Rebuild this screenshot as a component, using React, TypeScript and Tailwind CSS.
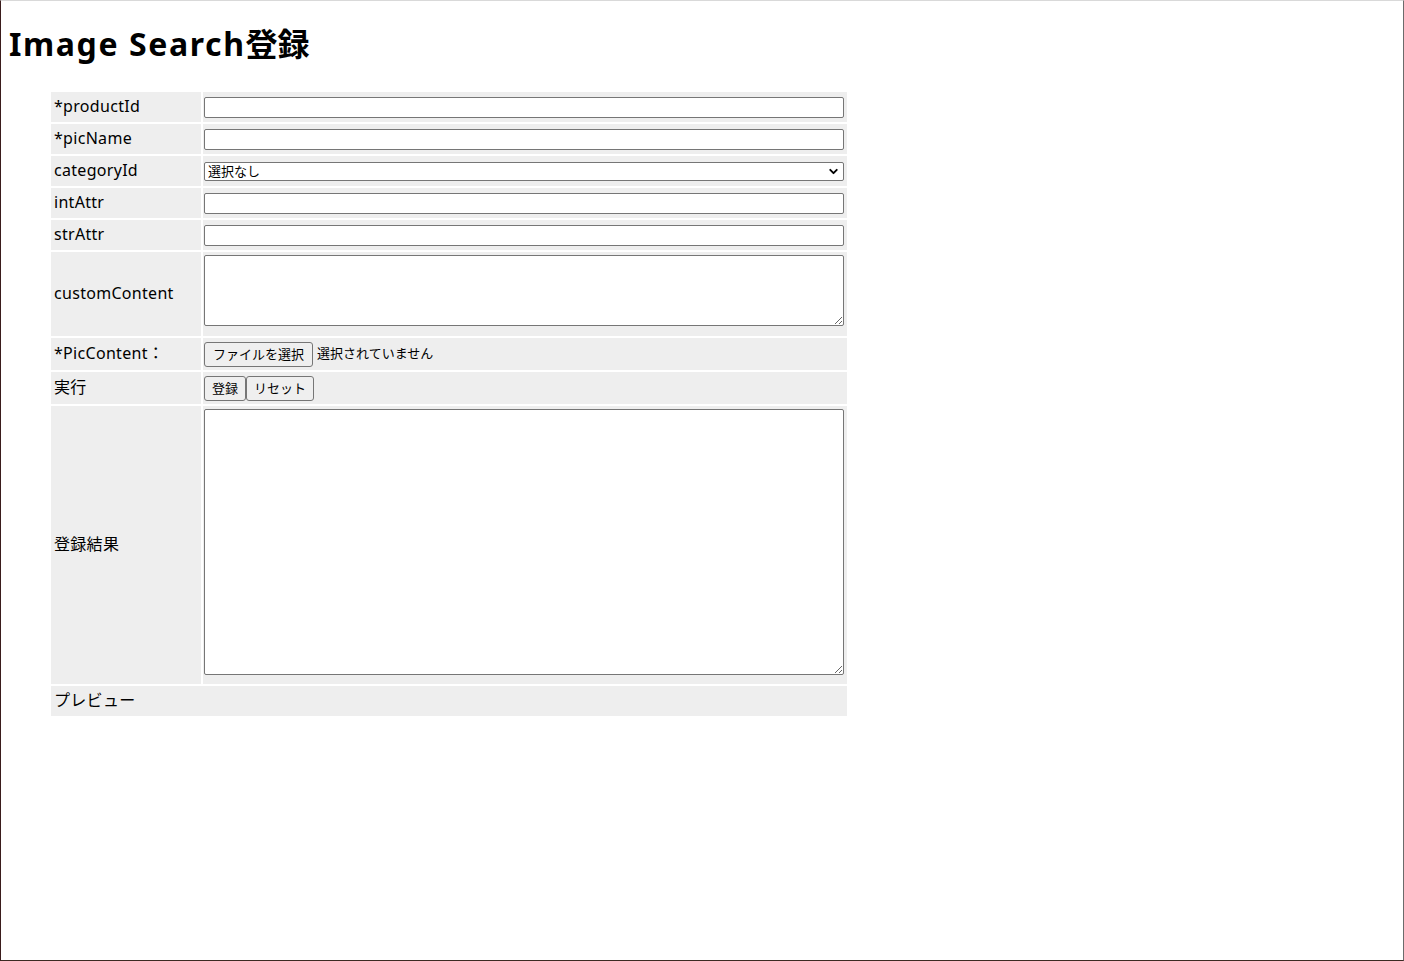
import { ChevronDown } from 'lucide-react'

const FONT = { fontFamily: '"Noto Sans", "Noto Sans CJK JP", sans-serif' }

const TEXT_ROWS = [
  { label: '*productId' },
  { label: '*picName' },
]

const label = 'w-[150px] bg-[#eeeeee] pl-[3px] pb-[2px] h-[30px] align-middle text-[16px] tracking-[0.3px] text-black'
const cell = 'w-[644px] bg-[#eeeeee] px-[1px] align-middle'
const inputCls = 'block w-[640px] h-[21px] border border-[#767676] rounded-[2px] bg-white'
const btn = 'h-[25px] border border-[#767676] rounded-[3px] bg-[#efefef] text-[13px] leading-none text-black'

export default function App() {
  return (
    <div
      className="h-[961px] box-border border-t border-t-[#d9d9d9] border-l border-l-[#3a1c1c] border-r border-r-[#6b6b6b] border-b border-b-[#3b2a22] bg-white pl-[8px] overflow-hidden"
      style={FONT}
    >
      <h1 className="mt-[19px] mb-[22px] text-[32px] leading-[48px] font-bold text-black">
        <span className="tracking-[1.6px]">Image Search</span>登録
      </h1>

      <table className="ml-[40px] border-separate border-spacing-[2px]">
        <tbody>
          {TEXT_ROWS.map(({ label: l }) => (
            <tr key={l}>
              <td className={label}>{l}</td>
              <td className={cell}>
                <input type="text" className={inputCls} />
              </td>
            </tr>
          ))}
          <tr>
            <td className={label}>categoryId</td>
            <td className={cell}>
              <div className="relative w-[640px]">
                <select className="block appearance-none w-[640px] h-[19px] border border-[#767676] rounded-[2px] bg-white pl-[3px] text-[13px] leading-none text-black">
                  <option>選択なし</option>
                </select>
                <ChevronDown className="absolute right-[4px] top-[3px] w-[13px] h-[13px] pointer-events-none text-black" strokeWidth={3.5} />
              </div>
            </td>
          </tr>
          <tr>
            <td className={label}>intAttr</td>
            <td className={cell}>
              <input type="text" className={inputCls} />
            </td>
          </tr>
          <tr>
            <td className={label}>strAttr</td>
            <td className={cell}>
              <input type="text" className={inputCls} />
            </td>
          </tr>
          <tr>
            <td className={`${label} h-[84px]`}>customContent</td>
            <td className={`${cell} align-top pt-[3px] pb-[10px]`}>
              <textarea className="block w-[640px] h-[71px] border border-[#767676] rounded-[2px] bg-white resize" />
            </td>
          </tr>
          <tr>
            <td className={`${label} h-[32px]`}>*PicContent：</td>
            <td className={cell}>
              <div className="flex items-center gap-[4px]">
                <button className={`${btn} px-[8px]`}>ファイルを選択</button>
                <span className="text-[13px] text-black">選択されていません</span>
              </div>
            </td>
          </tr>
          <tr>
            <td className={`${label} h-[32px]`}>実行</td>
            <td className={cell}>
              <div className="flex items-center">
                <button className={`${btn} px-[7px]`}>登録</button>
                <button className={`${btn} px-[7px]`}>リセット</button>
              </div>
            </td>
          </tr>
          <tr>
            <td className={`${label} h-[278px]`}>登録結果</td>
            <td className={`${cell} align-top pt-[3px] pb-[9px]`}>
              <textarea className="block w-[640px] h-[266px] border border-[#767676] rounded-[2px] bg-white resize" />
            </td>
          </tr>
          <tr>
            <td colSpan={2} className={label}>プレビュー</td>
          </tr>
        </tbody>
      </table>
    </div>
  )
}
